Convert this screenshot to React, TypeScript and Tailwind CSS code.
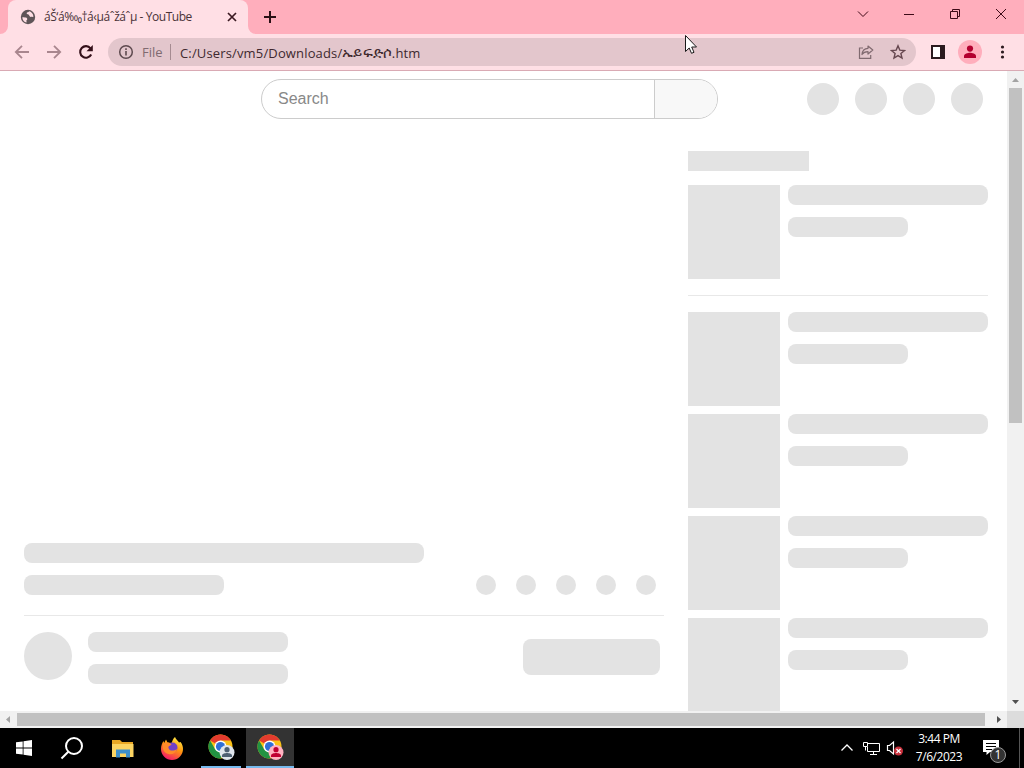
import React from "react";

const uiFont = "font-['Open_Sans','Noto_Sans',sans-serif]";

function Bar({ className }: { className: string }) {
  return <div className={`shrink-0 bg-[#e3e3e3] ${className}`}></div>;
}

function PersonIcon({ className }: { className: string }) {
  return (
    <svg viewBox="0 0 14 14" className={className} fill="currentColor">
      <circle cx="7" cy="3.6" r="3.1" />
      <path d="M1 13v-2c0-2.2 4-3.3 6-3.3s6 1.1 6 3.3v2z" />
    </svg>
  );
}

function TabStrip() {
  return (
    <div className="flex h-[34px] bg-[#ffaebc] pl-2 text-[#3d0a17]">
      <div className="relative flex h-[34px] w-60 items-center rounded-t-lg bg-[#ffdfe5] pl-3 pr-[10px]">
        <svg className="absolute -left-2 bottom-0 h-2 w-2" viewBox="0 0 8 8">
          <path d="M8 0v8H0a8 8 0 0 0 8-8" fill="#ffdfe5" />
        </svg>
        <svg className="absolute -right-2 bottom-0 h-2 w-2" viewBox="0 0 8 8">
          <path d="M0 0v8h8a8 8 0 0 1-8-8" fill="#ffdfe5" />
        </svg>
        <svg className="h-4 w-4 shrink-0" viewBox="0 0 16 16">
          <circle cx="8" cy="8" r="7.2" fill="#5f5558" />
          <path
            d="M2.3 8.2c1.8.2 3.9-.2 4.7 1 .6 1 .2 1.7-.6 2l.2 2.3C4 13 2.3 10.8 2.3 8.2zM9 2.3c-.3 1.3-2.6.8-2.3 2.3.2 1 1.800.5 2.300 1.500.5 1.300 1 2.100 2.600 1.700l1.700.3c.4-2.600-1.500-5.200-4.300-5.800z"
            fill="#ffdfe5"
          />
        </svg>
        <span className={`ml-2 w-[172px] whitespace-nowrap text-[12px] tracking-[-0.45px] text-[#4a3338] ${uiFont}`}>
          áŠ‘á‰₀†á‹µáˆžáˆµ - YouTube
        </span>
        <svg className="ml-auto h-3 w-3 shrink-0" viewBox="0 0 12 12">
          <path d="M2 2l8 8M10 2l-8 8" stroke="#3a1a22" strokeWidth="1.7" />
        </svg>
      </div>
      <svg className="ml-[15px] mt-[10px] h-[14px] w-[14px]" viewBox="0 0 14 14">
        <path d="M7 1v12M1 7h12" stroke="#2a0f15" strokeWidth="2" />
      </svg>
      <div className="ml-auto flex items-center pb-[6px]">
        <svg className="mr-[35px] h-3 w-3" viewBox="0 0 12 12" fill="none" stroke="currentColor">
          <path d="M1 3.5l5 5 5-5" />
        </svg>
        <svg className="mr-[34px] h-3 w-[11px]" viewBox="0 0 11 12" stroke="currentColor">
          <path d="M0 6.5h10" />
        </svg>
        <svg className="mr-[34px] h-3 w-3" viewBox="0 0 12 12" fill="none" stroke="currentColor">
          <path d="M1.5 3.5h7v7h-7zM3.5 3.5v-2h7v7h-2" />
        </svg>
        <svg className="mr-[17px] h-3 w-3" viewBox="0 0 12 12" stroke="currentColor">
          <path d="M1 1l10 10M11 1L1 11" />
        </svg>
      </div>
    </div>
  );
}

function Toolbar() {
  return (
    <div className="flex h-[37px] items-center border-b border-[#d9aab4] bg-[#ffdfe5] pl-[14px]">
      <svg className="h-4 w-4" viewBox="0 0 16 16" fill="none" stroke="#a9868e" strokeWidth="1.8">
        <path d="M15 8H2M8 1.8L1.8 8 8 14.2" />
      </svg>
      <svg className="ml-4 h-4 w-4" viewBox="0 0 16 16" fill="none" stroke="#a9868e" strokeWidth="1.8">
        <path d="M1 8h13M8 1.8L14.2 8 8 14.2" />
      </svg>
      <svg className="ml-4 h-4 w-4" viewBox="0 0 16 16">
        <path d="M13.2 10.5A5.8 5.8 0 1 1 12.5 4.3" fill="none" stroke="#35101a" strokeWidth="2.1" />
        <path d="M14.8 1v6.3H8.5z" fill="#35101a" />
      </svg>
      <div className={`ml-[14px] flex h-7 w-[808px] items-center rounded-full bg-[#e3c6cc] px-[10px] text-[13px] ${uiFont}`}>
        <svg className="h-4 w-4" viewBox="0 0 16 16" fill="none" stroke="#5e4a4f">
          <circle cx="8" cy="8" r="6.3" strokeWidth="1.5" />
          <path d="M8 7v4.5M8 4.3v1.6" strokeWidth="1.6" />
        </svg>
        <span className="ml-2 w-[21px] whitespace-nowrap pt-px text-[#806a70]">File</span>
        <div className="ml-[7px] h-4 w-px bg-[#a58b91]"></div>
        <span className="ml-[9px] flex items-baseline whitespace-nowrap pt-px leading-5 tracking-[0.15px] text-[#40292f]">
          C:/Users/vm5/Downloads/<span className="text-[15px] tracking-[0.1px]">ኡይፍድሶ</span>.htm
        </span>
        <svg className="ml-auto h-4 w-4" viewBox="0 0 16 16" fill="none" stroke="#806a70" strokeWidth="1.2">
          <path d="M5 4H1.500v10.300h11.200V11" />
          <path d="M10 2l4.800 4L10 10V7.700c-3 0-4.700.8-6 2.800.3-3.700 2.500-6 6-6.200z" strokeLinejoin="round" />
        </svg>
        <svg className="ml-4 h-4 w-4" viewBox="0 0 16 16">
          <path
            d="M8 1.8l1.8 4.3 4.7.4-3.6 3 1.1 4.6L8 11.6l-4 2.5 1.1-4.6-3.6-3 4.7-.4z"
            fill="none"
            stroke="#66474f"
            strokeWidth="1.4"
          />
        </svg>
      </div>
      <svg className="ml-[15px] h-[14px] w-[14px]" viewBox="0 0 14 14">
        <path d="M1 1h12v12H1z" fill="#fff" stroke="#2b1a1e" strokeWidth="2" />
        <path d="M9 0h5v14H9z" fill="#2b1a1e" />
      </svg>
      <div className="ml-[13px] flex h-6 w-6 items-center justify-center rounded-full bg-[#ffaebc] text-[#b3002f]">
        <PersonIcon className="h-[14px] w-[14px]" />
      </div>
      <svg className="ml-3 h-4 w-4" viewBox="0 0 16 16" fill="#2b1a1e">
        <circle cx="8.5" cy="3" r="1.6" />
        <circle cx="8.5" cy="8" r="1.6" />
        <circle cx="8.5" cy="13" r="1.6" />
      </svg>
    </div>
  );
}

function Masthead() {
  return (
    <div className="flex h-14 items-center pl-[261px]">
      <div className="flex h-10 w-[457px] overflow-hidden rounded-full border border-[#ccc] font-['Liberation_Sans',Arial,sans-serif]">
        <div className="flex w-[392px] items-center pl-4 text-base text-[#888]">Search</div>
        <div className="flex-1 border-l border-[#ccc] bg-[#f8f8f8]"></div>
      </div>
      <div className="ml-[89px] flex gap-4">
        {[0, 1, 2, 3].map((i) => (
          <Bar key={i} className="h-8 w-8 rounded-full" />
        ))}
      </div>
    </div>
  );
}

function RelatedItem() {
  return (
    <div className="flex h-[94px] shrink-0 gap-2">
      <Bar className="h-full w-[92px]" />
      <div className="flex flex-col gap-3">
        <Bar className="h-5 w-[200px] rounded-lg" />
        <Bar className="h-5 w-[120px] rounded-lg" />
      </div>
    </div>
  );
}

function WatchPage() {
  return (
    <div className="flex min-w-0 flex-1 flex-col overflow-hidden bg-white">
      <Masthead />
      <div className="flex min-h-0 flex-1 gap-6 pl-6">
        <div className="w-[640px] pt-[416px]">
          <Bar className="h-5 w-[400px] rounded-lg" />
          <div className="mt-3 flex justify-between pr-2">
            <Bar className="h-5 w-[200px] rounded-lg" />
            <div className="flex gap-5">
              {[0, 1, 2, 3, 4].map((i) => (
                <Bar key={i} className="h-5 w-5 rounded-full" />
              ))}
            </div>
          </div>
          <div className="mt-5 h-px bg-[#e8e8e8]"></div>
          <div className="mt-4 flex gap-4">
            <Bar className="h-12 w-12 rounded-full" />
            <div className="flex flex-col gap-3">
              <Bar className="h-5 w-[200px] rounded-lg" />
              <Bar className="h-5 w-[200px] rounded-lg" />
            </div>
            <Bar className="ml-auto mr-1 mt-[7px] h-9 w-[137px] rounded-lg" />
          </div>
        </div>
        <div className="flex w-[300px] flex-col pt-6">
          <Bar className="h-5 w-[121px]" />
          <div className="mt-[14px] flex shrink-0 border-b border-[#e8e8e8] pb-4">
            <RelatedItem />
          </div>
          <div className="mt-4 flex flex-col gap-2">
            {[0, 1, 2, 3].map((i) => (
              <RelatedItem key={i} />
            ))}
          </div>
        </div>
      </div>
    </div>
  );
}

function ChromeIcon({ active }: { active?: boolean }) {
  return (
    <svg className="ml-px h-[27px] w-[27px]" viewBox="0 0 27 27">
      <circle cx="12.5" cy="12.5" r="12" fill="#fbc116" />
      <path d="M12.5 12.5L2.1 6.5A12 12 0 0 1 22.9 6.5H12.5z" fill="#e33b2e" />
      <path d="M2.1 6.5A12 12 0 0 0 12.5 24.5l5.2-9H7.3z" fill="#229342" />
      <circle cx="12.5" cy="12.5" r="6" fill="#fff" />
      <circle cx="12.5" cy="12.5" r="4.6" fill="#2f6fd6" />
      <circle cx="19" cy="18.5" r="7.5" fill={active ? "#ffb3c1" : "#dfe5ec"} />
      <g fill={active ? "#c00032" : "#4d5f72"}>
        <circle cx="19" cy="15.7" r="2.6" />
        <path d="M14 23v-1.5c0-1.8 3.3-2.5 5-2.5s5 .7 5 2.5V23z" />
      </g>
    </svg>
  );
}

function Taskbar() {
  return (
    <div className="flex h-10 bg-black text-white">
      <div className="flex w-12 items-center justify-center">
        <svg className="h-4 w-4" viewBox="0 0 16 16" fill="#fff">
          <path d="M0 2.3l6.7-.9v6.1H0zM7.5 1.3L16 0v7.5H7.500zM0 8.4h6.700v6.200L0 13.700zM7.500 8.400H16V16l-8.500-1.200z" />
        </svg>
      </div>
      <div className="flex w-12 items-center justify-center">
        <svg className="h-6 w-6" viewBox="0 0 24 24" fill="none" stroke="#fff" strokeWidth="2">
          <circle cx="14" cy="10" r="8" />
          <path d="M8.3 15.7L1.5 22.5" />
        </svg>
      </div>
      <div className="flex w-[52px] items-center justify-center pl-[2px]">
        <svg className="h-[19px] w-[22px]" viewBox="0 0 22 19">
          <path d="M0 1h8l2 2h11v15H0z" fill="#e9a825" />
          <path d="M0 5h21.5v13H0z" fill="#fcd462" />
          <path d="M4 18.5v-8h14v8h-4v-4H8v4z" fill="#3e8fca" />
        </svg>
      </div>
      <div className="flex w-12 items-center justify-center">
        <svg className="h-6 w-6" viewBox="0 0 24 24">
          <defs>
            <linearGradient id="fox" x1="0.8" y1="0" x2="0.3" y2="1">
              <stop offset="0" stopColor="#fff04a" />
              <stop offset="0.45" stopColor="#ff980e" />
              <stop offset="1" stopColor="#f5156c" />
            </linearGradient>
          </defs>
          <path
            d="M15 1c1 2.5 3 3.5 4 5.5l1.5-.5C22.5 8.5 23 11 23 13a11 11 0 0 1-22 0c0-3 1-6 2.5-8l.7 2L6 3.5l1.500 3 4 .5C12.500 5 13 2.500 15 1z"
            fill="url(#fox)"
          />
          <circle cx="12.5" cy="11.5" r="5" fill="#7140c8" />
          <path d="M3 8c3-2 6-2 8.500.5-1 1.500-3.500 1-3 3.500.6 3 5 3.500 8.500 1-1 4-5 6-8.500 5C4 17 2 13 3 8z" fill="#ff8a2a" />
        </svg>
      </div>
      <div className="ml-[5px] flex w-10 items-center justify-center border-b-2 border-[#76b9ed]">
        <ChromeIcon />
      </div>
      <div className="ml-[5px] flex w-12 items-center justify-center border-b-2 border-[#76b9ed] bg-[#333]">
        <ChromeIcon active />
      </div>
      <div className="ml-auto flex items-center">
        <svg className="h-3 w-3" viewBox="0 0 12 12" fill="none" stroke="#fff" strokeWidth="1.3">
          <path d="M.5 8.500L6 3l5.500 5.500" />
        </svg>
        <svg className="ml-[10px] h-[15px] w-[17px]" viewBox="0 0 17 15" fill="none" stroke="#fff">
          <path d="M5 2.5h11.5v8H4.5V6M10.5 10.5v3M7 13.5h7M.5 1.500h4v4h-4zM2.500 5.500v4" />
        </svg>
        <svg className="ml-[6px] h-4 w-[18px]" viewBox="0 0 18 16">
          <path d="M1.5 5.5h2l4-3.500v12l-4-3.500h-2z" fill="none" stroke="#fff" strokeWidth="1.2" />
          <circle cx="12.5" cy="11" r="4.5" fill="#c9303c" />
          <path d="M10.5 9l4 4M14.5 9l-4 4" stroke="#fff" strokeWidth="1.2" />
        </svg>
        <div className={`ml-[7px] flex w-[56px] flex-col items-center whitespace-nowrap text-[12px] leading-[18px] tracking-[-0.45px] ${uiFont}`}>
          <span>3:44 PM</span>
          <span>7/6/2023</span>
        </div>
        <div className="relative ml-4 h-6 w-6">
          <svg className="h-6 w-6" viewBox="0 0 24 24">
            <path d="M0 4h16v12H7l-3.500 3v-3H0z" fill="#fff" />
            <path d="M3 7.5h10M3 10.5h10M3 13.5h6" stroke="#000" />
          </svg>
          <div className={`absolute left-[7px] top-[11px] flex h-4 w-4 items-center justify-center rounded-full border border-[#999] bg-[#333] text-[12px] leading-none ${uiFont}`}>
            1
          </div>
        </div>
        <div className="ml-3 mr-1 h-10 w-px bg-[#555]"></div>
      </div>
    </div>
  );
}

export default function App() {
  return (
    <div className="relative flex h-[768px] w-[1024px] flex-col overflow-hidden">
      <TabStrip />
      <Toolbar />
      <div className="flex h-[640px]">
        <WatchPage />
        <div className="flex w-[17px] flex-col items-center bg-[#f1f1f1]">
          <svg className="h-[17px] w-[17px] shrink-0" viewBox="0 0 17 17">
            <path d="M5 11l3.500-4 3.500 4z" fill="#a3a3a3" />
          </svg>
          <div className="h-[335px] w-[13px] bg-[#c1c1c1]"></div>
          <svg className="mt-auto h-[17px] w-[17px]" viewBox="0 0 17 17">
            <path d="M5 6l3.500 4L12 6z" fill="#505050" />
          </svg>
        </div>
      </div>
      <div className="flex h-[17px] items-center bg-[#f1f1f1]">
        <svg className="h-[17px] w-[17px]" viewBox="0 0 17 17">
          <path d="M10 5L6 8.500l4 3.500z" fill="#a3a3a3" />
        </svg>
        <div className="h-[13px] w-[968px] bg-[#c1c1c1]"></div>
        <svg className="ml-[5px] h-[17px] w-[17px]" viewBox="0 0 17 17">
          <path d="M7 5l4 3.500L7 12z" fill="#505050" />
        </svg>
        <div className="h-full flex-1 bg-[#dcdcdc]"></div>
      </div>
      <Taskbar />
      <svg className="absolute left-[685px] top-[35px] h-[19px] w-3" viewBox="0 0 12 19">
        <path d="M.5.500v16l3.700-3.500 2.300 5.300 2.500-1-2.300-5.300h4.800z" fill="#fff" stroke="#1a1a1a" />
      </svg>
    </div>
  );
}
